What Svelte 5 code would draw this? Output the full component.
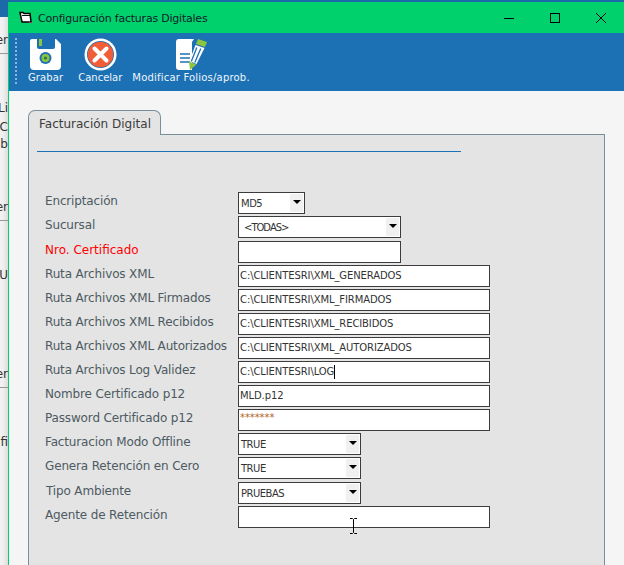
<script>
  const rows = [
    { label: 'Encriptación', kind: 'select', value: 'MD5', size: 'xs' },
    { label: 'Sucursal', kind: 'select', value: '<TODAS>', size: 'md', inset: true },
    { label: 'Nro. Certificado', kind: 'input', value: '', size: 'md', red: true, extra: true },
    { label: 'Ruta Archivos XML', kind: 'input', value: 'C:\\CLIENTESRI\\XML_GENERADOS', size: 'lg' },
    { label: 'Ruta Archivos XML Firmados', kind: 'input', value: 'C:\\CLIENTESRI\\XML_FIRMADOS', size: 'lg' },
    { label: 'Ruta Archivos XML Recibidos', kind: 'input', value: 'C:\\CLIENTESRI\\XML_RECIBIDOS', size: 'lg' },
    { label: 'Ruta Archivos XML Autorizados', kind: 'input', value: 'C:\\CLIENTESRI\\XML_AUTORIZADOS', size: 'lg' },
    { label: 'Ruta Archivos Log Validez', kind: 'input', value: 'C:\\CLIENTESRI\\LOG', size: 'lg', caret: true },
    { label: 'Nombre Certificado p12', kind: 'input', value: 'MLD.p12', size: 'lg' },
    { label: 'Password Certificado p12', kind: 'input', value: '*******', size: 'lg', pass: true },
    { label: 'Facturacion Modo Offline', kind: 'select', value: 'TRUE', size: 'sm' },
    { label: 'Genera Retención en Cero', kind: 'select', value: 'TRUE', size: 'sm' },
    { label: 'Tipo Ambiente', kind: 'select', value: 'PRUEBAS', size: 'sm', extra: true, nudge: true },
    { label: 'Agente de Retención', kind: 'input', value: '', size: 'lg' }
  ];
  const behind = [
    { t: 'er', y: 33 }, { t: 'Li', y: 101 }, { t: 'C', y: 120 }, { t: 'ab', y: 137 },
    { t: 'er', y: 200 }, { t: 'U', y: 268 }, { t: 'er', y: 367 }, { t: 'fi', y: 435 }
  ];
</script>

<div class="desk">
  <div class="backstrip"></div>
  {#each behind as b}
    <span class="frag" style="top:{b.y}px">{b.t}</span>
  {/each}
  <i class="rule r1"></i><i class="rule r2"></i><i class="rule r3"></i>

  <section class="win">
    <header class="title">
      <svg class="appicon" width="14" height="14" viewBox="0 0 14 14">
        <path d="M1 1.500h3l1 1h6l1 8.500H3z" fill="#fff" stroke="#000" stroke-width="1.500"/>
        <path d="M3 4.500h8" stroke="#111" stroke-width="1"/>
        <path d="M10 11.500h3" stroke="#a03060" stroke-width="1"/>
      </svg>
      <span class="ttext">Configuración facturas Digitales</span>
      <div class="ctrls">
        <svg width="12" height="12" viewBox="0 0 12 12"><path d="M1 6.500h10" stroke="#000" stroke-width="1"/></svg>
        <svg width="12" height="12" viewBox="0 0 12 12"><rect x="1.500" y="1.500" width="9" height="9" fill="none" stroke="#000" stroke-width="1"/></svg>
        <svg width="12" height="12" viewBox="0 0 12 12"><path d="M1 1l10 10M11 1L1 11" stroke="#000" stroke-width="1"/></svg>
      </div>
    </header>

    <nav class="tools">
      <div class="grip"></div>
      <div class="tool t1">
        <svg width="32" height="33" viewBox="0 0 32 33">
          <path d="M2 1h5v8q0 2 2 2h14q2 0 2-2V1h1l5 5v22q0 4-4 4H4q-4 0-4-4V3q0-2 2-2z" fill="#fff"/>
          <rect x="9" y="1" width="3" height="7" fill="#8cc63f"/>
          <circle cx="15.500" cy="20" r="6" fill="#1d71b4"/>
          <circle cx="15.500" cy="20" r="4" fill="#8cc63f"/>
          <circle cx="15.500" cy="20" r="1.600" fill="#2a7a50"/>
        </svg>
        <span>Grabar</span>
      </div>
      <div class="tool t2">
        <svg width="33" height="33" viewBox="0 0 33 33">
          <circle cx="16.500" cy="16.500" r="16" fill="#fff"/>
          <circle cx="16.500" cy="16.500" r="13.500" fill="#1c71b5"/>
          <circle cx="16.500" cy="16.500" r="12.800" fill="#f15d36"/>
          <path d="M10.500 10.500l12 12M22.500 10.500l-12 12" stroke="#fff" stroke-width="4" stroke-linecap="round"/>
        </svg>
        <span>Cancelar</span>
      </div>
      <div class="tool t3">
        <svg width="31" height="33" viewBox="0 0 31 33">
          <path d="M3 1h15l-2 3v28H3q-3 0-3-3V4q0-3 3-3z" fill="#fff"/>
          <path d="M4 16h10M4 20h10M4 24h10" stroke="#1d71b4" stroke-width="1.600"/>
          <path d="M22 1l9 3-2 5-9-3z" fill="#8cc63f"/>
          <path d="M19.500 7l9 3-8 16-7-3z" fill="#fff"/>
          <path d="M20.800 9.500l-5.500 14M24.800 10.500l-6 14" stroke="#1d71b4" stroke-width="1.300"/>
          <path d="M13 23.500l7.500 3L14 32z" fill="#8cc63f"/>
        </svg>
        <span>Modificar Folios/aprob.</span>
      </div>
    </nav>

    <main class="body">
      <div class="tab">Facturación Digital</div>
      <div class="panel">
        <div class="bar"></div>
        <div class="form">
          {#each rows as r}
            <div class="row" class:extra={r.extra}>
              <span class="lbl" class:red={r.red} class:nudge={r.nudge}>{r.label}</span>
              <div class="field {r.size}" class:inset={r.inset} class:pass={r.pass} class:sel={r.kind === 'select'}>
                <span class="val">{r.value}</span>{#if r.caret}<i class="caret"></i>{/if}
                {#if r.kind === 'select'}<span class="arrow"><b></b></span>{/if}
              </div>
            </div>
          {/each}
        </div>
      </div>
    </main>
  </section>

  <svg class="ibeam" width="9" height="16" viewBox="0 0 9 16">
    <path d="M1 .5h2.500L4.500 1.500 5.500.5H8M4.500 1.500v13M1 15.500h2.500l1-1 1 1H8" fill="none" stroke="#000" stroke-width="1"/>
  </svg>
</div>

<style>
  :global(body) { margin: 0; }
  .desk {
    position: relative;
    width: 624px;
    height: 565px;
    overflow: hidden;
    background: linear-gradient(90deg, #f2f2f2 0, #f0f0f0 3px, #dcdcdc 8px, #f5f5f5 8px);
    font-family: "DejaVu Sans", sans-serif;
  }
  .backstrip { height: 17px; background: #1d6aa8; }
  .frag { position: absolute; right: 616px; font-size: 12px; line-height: 14px; color: #333; white-space: nowrap; }
  .rule { position: absolute; left: 0; width: 8px; height: 1px; background: #999; }
  .r1 { top: 53px; } .r2 { top: 220px; } .r3 { top: 387px; }

  .win {
    position: absolute;
    left: 8px; top: 2px; right: 0; bottom: 0;
    border-left: 1px solid #00d06c;
    background: #f5f5f5;
    display: flex;
    flex-direction: column;
  }
  .title {
    height: 31px;
    flex: none;
    background: #00d16d;
    display: flex;
    align-items: center;
    padding: 0 17px 0 10px;
  }
  .appicon { margin-right: 5px; }
  .ttext { font-size: 11px; letter-spacing: -0.22px; color: #10202a; flex: 1; margin-top: 2px; }
  .ctrls { display: flex; gap: 34px; }
  .tools {
    height: 58px;
    flex: none;
    background: #1c71b5;
    display: flex;
    padding: 5px 0 0 6px;
    box-sizing: border-box;
  }
  .grip {
    width: 0; height: 46px;
    border-left: 2px dotted #8fb6d8;
  }
  .tool {
    display: flex; flex-direction: column; align-items: center;
    color: #eef5fb; font-size: 10px; line-height: 12px; gap: 1px;
  }
  .tool svg { display: block; }
  .t1 { margin-left: 11px; letter-spacing: 0.1px; }
  .t2 { margin-left: 15px; }
  .t3 { margin-left: 10px; letter-spacing: 0.2px; }

  .body { padding: 19px 19px 0 19px; flex: 1; min-height: 0; }
  .tab {
    width: 133px; height: 25px;
    box-sizing: border-box;
    border: 1px solid #78909c;
    border-bottom: none;
    border-radius: 7px 7px 0 0;
    background: #e4e4e4;
    color: #3c3c3c;
    font-size: 12px;
    padding: 5px 0 0 10px;
    line-height: 16px;
    position: relative;
    z-index: 1;
    margin-bottom: -1px;
  }
  .panel {
    width: 577px;
    height: 500px;
    box-sizing: border-box;
    border: 1px solid #78909c;
    background: #e4e4e4;
    padding: 16px 0 0 8px;
  }
  .bar { width: 424px; height: 1px; background: #1c71b5; }
  .form { margin: 40px 0 0 8px; display: flex; flex-direction: column; gap: 2px; }
  .row { display: flex; height: 22px; }
  .row.extra { margin-top: 1px; }
  .lbl {
    width: 193px; flex: none;
    font-size: 12px;
    line-height: 16px;
    padding-top: 1px;
    box-sizing: border-box;
    letter-spacing: -0.15px;
    color: #4d5a62;
    white-space: nowrap;
  }
  .lbl.red { color: #f00; letter-spacing: 0; }
  .lbl.nudge { padding-left: 1px; }
  .field {
    box-sizing: border-box;
    height: 22px;
    border: 1px solid #3c3c3c;
    background: #fff;
    font-size: 10px;
    line-height: 20px;
    letter-spacing: -0.1px;
    color: #333;
    padding-left: 1px;
    display: flex;
    position: relative;
    white-space: nowrap;
  }
  .field.sel { letter-spacing: -0.5px; line-height: 21px; padding-left: 2px; }
  .field.inset { padding-left: 5px; letter-spacing: -1px; }
  .xs { width: 67px; } .sm { width: 123px; } .md { width: 163px; } .lg { width: 252px; }
  .pass .val { color: #b5651d; line-height: 16px; }
  .caret { width: 1px; height: 14px; background: #000; margin: 3px 0 0 0; }
  .arrow {
    position: absolute; right: 1px; top: 1px; bottom: 1px; width: 13px;
    background: #f0f0f0; display: flex; align-items: center; justify-content: center;
  }
  .arrow b {
    width: 0; height: 0; border: 4px solid transparent; border-top: 4px solid #000; border-bottom: 0;
    margin-bottom: 2px;
  }
  .ibeam { position: absolute; left: 349px; top: 518px; }
</style>
